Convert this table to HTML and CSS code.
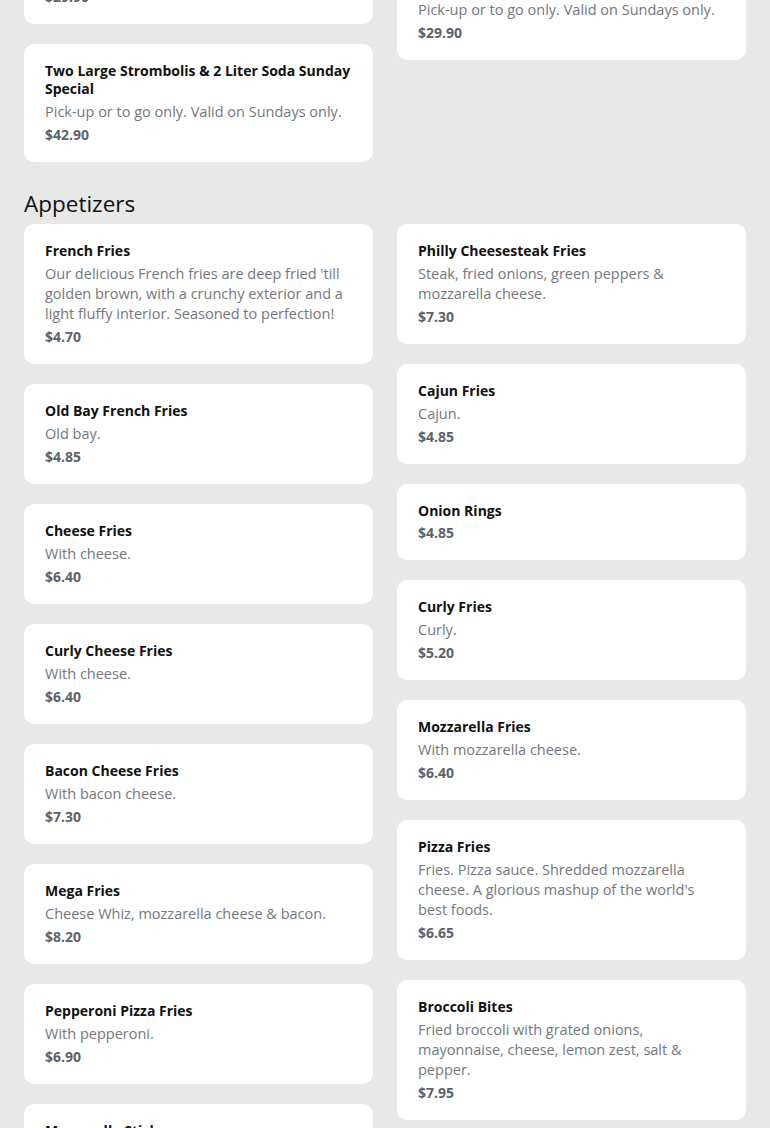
FILE: index.html
```html
<!DOCTYPE html>
<html lang="en">
<head>
<meta charset="utf-8">
<title>Menu</title>
<link rel="stylesheet" href="styles.css">
</head>
<body>
<main class="menu">
  <section class="section">
    <h2 class="section-title">Specials</h2>
    <div class="grid">
      <div class="col">
        <div class="card">
          <h3 class="item-name">Large Pizza &amp; 2 Liter Soda</h3>
          <p class="item-desc">Pick-up or to go only. Valid on Sundays only.</p>
          <p class="item-price">$21.90</p>
        </div>
        <div class="card">
          <h3 class="item-name">Two Large Pizzas Sunday Special</h3>
          <p class="item-desc">Pick-up or to go only. Valid on Sundays only.</p>
          <p class="item-price">$29.90</p>
        </div>
        <div class="card">
          <h3 class="item-name">Two Large Strombolis &amp; 2 Liter Soda Sunday Special</h3>
          <p class="item-desc">Pick-up or to go only. Valid on Sundays only.</p>
          <p class="item-price">$42.90</p>
        </div>
      </div>
      <div class="col">
        <div class="card">
          <h3 class="item-name">Two Large Pizzas &amp; 2 Liter Soda Sunday Special</h3>
          <p class="item-desc">Pick-up or to go only. Valid on Sundays only.</p>
          <p class="item-price">$32.90</p>
        </div>
        <div class="card">
          <h3 class="item-name">Large Stromboli &amp; 2 Liter Soda Sunday Special</h3>
          <p class="item-desc">Pick-up or to go only. Valid on Sundays only.</p>
          <p class="item-price">$29.90</p>
        </div>
      </div>
    </div>
  </section>

  <section class="section">
    <h2 class="section-title">Appetizers</h2>
    <div class="grid">
      <div class="col">
        <div class="card">
          <h3 class="item-name">French Fries</h3>
          <p class="item-desc">Our delicious French fries are deep fried 'till golden brown, with a crunchy exterior and a light fluffy interior. Seasoned to perfection!</p>
          <p class="item-price">$4.70</p>
        </div>
        <div class="card">
          <h3 class="item-name">Old Bay French Fries</h3>
          <p class="item-desc">Old bay.</p>
          <p class="item-price">$4.85</p>
        </div>
        <div class="card">
          <h3 class="item-name">Cheese Fries</h3>
          <p class="item-desc">With cheese.</p>
          <p class="item-price">$6.40</p>
        </div>
        <div class="card">
          <h3 class="item-name">Curly Cheese Fries</h3>
          <p class="item-desc">With cheese.</p>
          <p class="item-price">$6.40</p>
        </div>
        <div class="card">
          <h3 class="item-name">Bacon Cheese Fries</h3>
          <p class="item-desc">With bacon cheese.</p>
          <p class="item-price">$7.30</p>
        </div>
        <div class="card">
          <h3 class="item-name">Mega Fries</h3>
          <p class="item-desc">Cheese Whiz, mozzarella cheese &amp; bacon.</p>
          <p class="item-price">$8.20</p>
        </div>
        <div class="card">
          <h3 class="item-name">Pepperoni Pizza Fries</h3>
          <p class="item-desc">With pepperoni.</p>
          <p class="item-price">$6.90</p>
        </div>
        <div class="card">
          <h3 class="item-name">Mozzarella Sticks</h3>
          <p class="item-desc">Served with marinara sauce.</p>
          <p class="item-price">$6.90</p>
        </div>
      </div>
      <div class="col">
        <div class="card">
          <h3 class="item-name">Philly Cheesesteak Fries</h3>
          <p class="item-desc">Steak, fried onions, green peppers &amp; mozzarella cheese.</p>
          <p class="item-price">$7.30</p>
        </div>
        <div class="card">
          <h3 class="item-name">Cajun Fries</h3>
          <p class="item-desc">Cajun.</p>
          <p class="item-price">$4.85</p>
        </div>
        <div class="card">
          <h3 class="item-name">Onion Rings</h3>
          <p class="item-price">$4.85</p>
        </div>
        <div class="card">
          <h3 class="item-name">Curly Fries</h3>
          <p class="item-desc">Curly.</p>
          <p class="item-price">$5.20</p>
        </div>
        <div class="card">
          <h3 class="item-name">Mozzarella Fries</h3>
          <p class="item-desc">With mozzarella cheese.</p>
          <p class="item-price">$6.40</p>
        </div>
        <div class="card">
          <h3 class="item-name">Pizza Fries</h3>
          <p class="item-desc">Fries. Pizza sauce. Shredded mozzarella cheese. A glorious mashup of the world's best foods.</p>
          <p class="item-price">$6.65</p>
        </div>
        <div class="card">
          <h3 class="item-name">Broccoli Bites</h3>
          <p class="item-desc">Fried broccoli with grated onions, mayonnaise, cheese, lemon zest, salt &amp; pepper.</p>
          <p class="item-price">$7.95</p>
        </div>
      </div>
    </div>
  </section>
</main>
</body>
</html>
```

FILE: styles.css
```css
html, body {
  margin: 0;
  padding: 0;
  background: #e8e8e8;
  font-family: "Open Sans", "Liberation Sans", Arial, sans-serif;
}

.menu {
  margin-top: -232px;
  padding: 0 24px;
  display: flex;
  flex-direction: column;
  gap: 26px;
}

.section-title {
  margin: 0 0 4px;
  font-size: 22.5px;
  line-height: 32px;
  font-weight: 400;
  color: #111111;
}

.grid {
  display: grid;
  grid-template-columns: 1fr 1fr;
  column-gap: 24px;
  align-items: start;
}

.col {
  display: flex;
  flex-direction: column;
  gap: 20px;
}

.card {
  display: flex;
  flex-direction: column;
  background: #ffffff;
  border-radius: 10px;
  padding: 18px 20px 17px 21px;
}

.item-name {
  margin: 0;
  font-size: 14px;
  line-height: 18px;
  font-weight: 700;
  color: #111111;
}

.item-desc {
  margin: 4px 0 0;
  font-size: 14.5px;
  line-height: 20px;
  font-weight: 400;
  color: #73777e;
}

.item-price {
  margin: 3px 0 0;
  font-size: 14px;
  line-height: 20px;
  font-weight: 700;
  color: #5c626b;
}
```
